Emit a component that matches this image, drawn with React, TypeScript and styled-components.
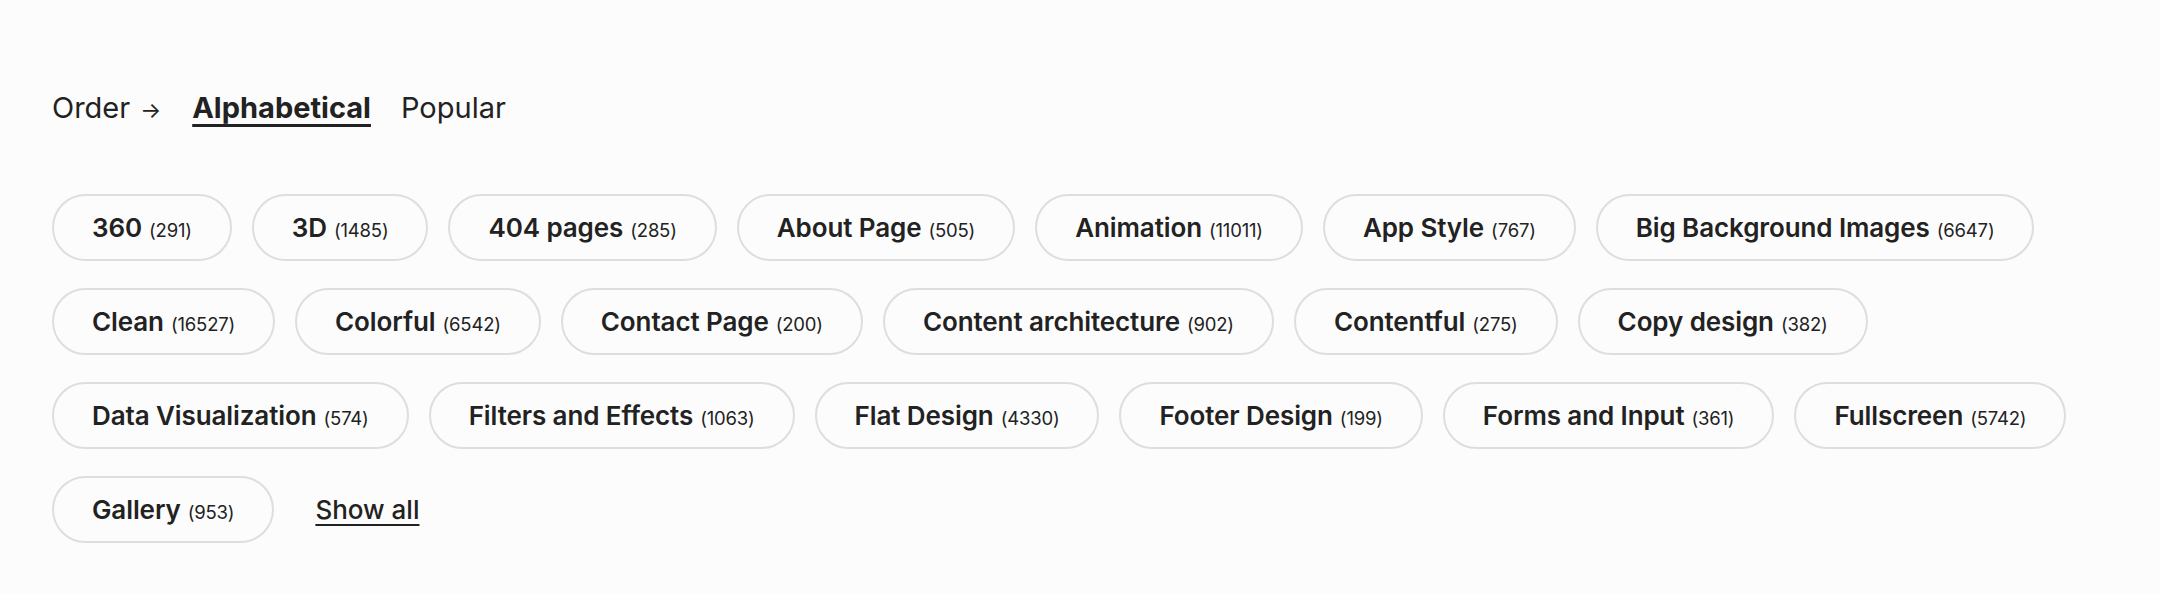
import React from "react";
import styled, { createGlobalStyle } from "styled-components";

const Global = createGlobalStyle`
  html, body { margin: 0; padding: 0; background: #fcfcfc; }
  body { font-family: Inter, "Noto Sans", sans-serif; color: #222; }
`;

const Page = styled.div`
  padding: 90px 16px 40px 52px;
`;

const OrderBar = styled.div`
  display: flex;
  align-items: baseline;
  font-size: 29px;
  line-height: 35px;
  color: #222;
`;

const OrderLabel = styled.span`
  font-weight: 400;
  margin-right: 31px;
`;

const Arrow = styled.span`
  font-size: 22px;
  margin-left: 10px;
`;

const OrderOption = styled.a<{ $active?: boolean }>`
  font-weight: ${(p) => (p.$active ? 700 : 400)};
  text-decoration: ${(p) => (p.$active ? "underline" : "none")};
  text-decoration-thickness: 3px;
  text-underline-offset: 6px;
  margin-right: 30px;
  color: #222;
  cursor: pointer;
`;

const Tags = styled.div`
  display: flex;
  flex-wrap: wrap;
  align-items: center;
  gap: 27px 20px;
  margin-top: 66px;
`;

const Pill = styled.a`
  display: inline-flex;
  align-items: baseline;
  justify-content: center;
  box-sizing: border-box;
  height: 67px;
  padding: 0 38px;
  border: 2px solid #dcdfde;
  border-radius: 999px;
  background: #fcfcfc;
  color: #222;
  line-height: 63px;
  white-space: nowrap;
  cursor: pointer;
`;

const PillLabel = styled.span`
  font-size: 26px;
  font-weight: 600;
  letter-spacing: -0.1px;
`;

const Count = styled.span`
  font-size: 18.5px;
  font-weight: 400;
  margin-left: 7px;
  letter-spacing: -0.2px;
`;

const ShowAll = styled.a`
  font-size: 26px;
  font-weight: 500;
  color: #222;
  text-decoration: underline;
  text-decoration-thickness: 2px;
  text-underline-offset: 5px;
  margin-left: 21px;
  cursor: pointer;
`;

const tags: [string, number][] = [
  ["360", 291],
  ["3D", 1485],
  ["404 pages", 285],
  ["About Page", 505],
  ["Animation", 11011],
  ["App Style", 767],
  ["Big Background Images", 6647],
  ["Clean", 16527],
  ["Colorful", 6542],
  ["Contact Page", 200],
  ["Content architecture", 902],
  ["Contentful", 275],
  ["Copy design", 382],
  ["Data Visualization", 574],
  ["Filters and Effects", 1063],
  ["Flat Design", 4330],
  ["Footer Design", 199],
  ["Forms and Input", 361],
  ["Fullscreen", 5742],
  ["Gallery", 953],
];

export default function App() {
  return (
    <>
      <Global />
      <Page>
        <OrderBar>
          <OrderLabel>
            Order<Arrow>→</Arrow>
          </OrderLabel>
          <OrderOption $active>Alphabetical</OrderOption>
          <OrderOption>Popular</OrderOption>
        </OrderBar>
        <Tags>
          {tags.map(([name, count]) => (
            <Pill key={name}>
              <PillLabel>{name}</PillLabel>
              <Count>({count})</Count>
            </Pill>
          ))}
          <ShowAll>Show all</ShowAll>
        </Tags>
      </Page>
    </>
  );
}
